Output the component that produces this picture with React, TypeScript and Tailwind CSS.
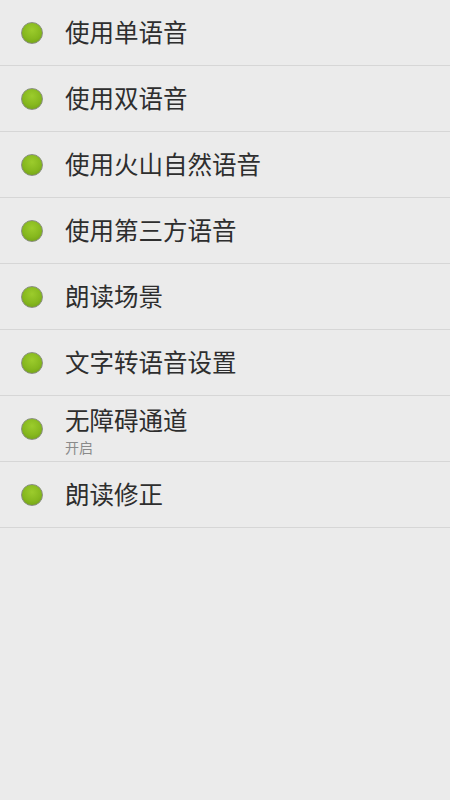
import React from "react";

const items: { title: string; sub?: string }[] = [
  { title: "使用单语音" },
  { title: "使用双语音" },
  { title: "使用火山自然语音" },
  { title: "使用第三方语音" },
  { title: "朗读场景" },
  { title: "文字转语音设置" },
  { title: "无障碍通道", sub: "开启" },
  { title: "朗读修正" },
];

function Dot() {
  return (
    <div className="w-[22px] h-[22px] rounded-full border border-[#8a8f80] bg-[radial-gradient(circle_at_50%_35%,#9ccc2c_0%,#86b81e_55%,#6c9a14_100%)] shrink-0" />
  );
}

export default function App() {
  return (
    <div
      className="w-[450px] h-[800px] bg-[#ebebeb]"
      style={{ fontFamily: '"Noto Sans CJK SC", "Noto Sans", sans-serif' }}
    >
      {items.map((it) => (
        <div
          key={it.title}
          className="h-[66px] border-b border-[#d6d6d6] flex items-center pl-[21px]"
        >
          <Dot />
          <div className={it.sub ? "ml-[22px] flex flex-col pt-[5px]" : "ml-[22px] flex flex-col pb-[1px]"}>
            <div className="text-[24.5px] leading-[28px] text-[#2e2e2e]">{it.title}</div>
            {it.sub && (
              <div className="mt-[4px] text-[14px] leading-[18px] text-[#8a8a8a]">{it.sub}</div>
            )}
          </div>
        </div>
      ))}
    </div>
  );
}
